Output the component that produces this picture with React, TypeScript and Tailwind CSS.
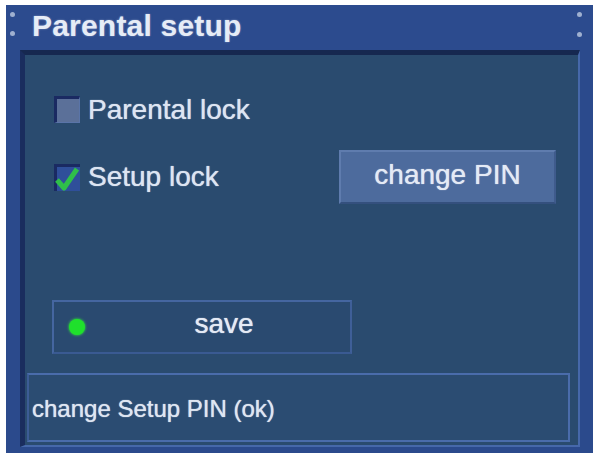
import React from "react";

const font = { fontFamily: '"Liberation Sans", Arial, sans-serif' };

function Dot() {
  return <div className="w-[5px] h-[5px] rounded-full bg-[#9fb0d0]" />;
}

function CheckBox({ checked }: { checked?: boolean }) {
  return (
    <div className="relative w-[26px] h-[27px] border-l-[3px] border-t-[3px] border-r border-b border-l-[#1a2a62] border-t-[#1a2a62] border-r-[#5a74a8] border-b-[#5a74a8] bg-[#5b7099]">
      {checked && (
        <svg viewBox="0 0 26 27" className="absolute -left-[3px] -top-[3px] w-[26px] h-[27px]">
          <rect x="0" y="0" width="26" height="27" fill="#2f4f9a" />
          <rect x="0" y="0" width="3" height="27" fill="#1a2a62" />
          <rect x="0" y="0" width="26" height="3" fill="#1a2a62" />
          <path d="M3 16 L10 24 L23 5" stroke="#2fbf4a" strokeWidth="5" fill="none" strokeLinejoin="round" />
        </svg>
      )}
    </div>
  );
}

export default function App() {
  return (
    <div className="w-[593px] h-[459px] bg-white pt-[5px] pl-[6px] pb-[6px]" style={font}>
      <div className="flex flex-col h-full bg-[#2b4a8c]">
        {/* Title bar */}
        <div className="relative h-[45px] shrink-0 bg-[#2c4b8e] flex items-center pl-[26px]">
          <div className="absolute left-[4px] top-[7px] flex flex-col gap-[14px]">
            <Dot />
            <Dot />
          </div>
          <div className="absolute right-[11px] top-[7px] flex flex-col gap-[15px]">
            <Dot />
            <Dot />
          </div>
          <span className="text-[30px] font-bold text-[#e6ecf6] leading-none -mt-[4px] tracking-[0.2px] [text-shadow:0_0_2px_rgba(220,230,250,0.5)]">
            Parental setup
          </span>
        </div>

        {/* Body */}
        <div className="flex-1 flex pl-[14px] pr-[13px] pb-[6px]">
          <div className="flex-1 flex flex-col bg-[#2a4b6f] border-l-[5px] border-t-[5px] border-r-[2px] border-b-[2px] border-l-[#1a2d5e] border-t-[#162850] border-r-[#4668aa] border-b-[#4668aa]">
            {/* Parental lock */}
            <div className="mt-[41px] ml-[29px] h-[27px] flex items-center">
              <CheckBox />
              <span className="ml-[8px] text-[28px] text-[#dde5f2] leading-none [text-shadow:0_0_1px_#dde5f2]">Parental lock</span>
            </div>

            {/* Setup lock + change PIN */}
            <div className="mt-[27px] ml-[29px] h-[54px] flex items-center">
              <div className="w-[285px] flex items-center">
                <CheckBox checked />
                <span className="ml-[8px] text-[28px] text-[#dde5f2] leading-none [text-shadow:0_0_1px_#dde5f2]">Setup lock</span>
              </div>
              <div className="w-[217px] h-[54px] flex items-center justify-center bg-[#4d6b9d] border-t-2 border-l-2 border-[#5f7cae] border-r-2 border-b-2 border-r-[#3f5b8c] border-b-[#34507e]">
                <span className="text-[28px] text-[#e4eaf5] leading-none -mt-[4px] [text-shadow:0_0_1px_#e4eaf5]">change PIN</span>
              </div>
            </div>

            {/* Save */}
            <div className="mt-[96px] ml-[27px] w-[300px] h-[54px] flex items-center border-2 border-[#4566a0] border-r-[#3f5f98] border-b-[#3a5a92] bg-[#2a4a70]">
              <div className="ml-[15px] w-[16px] h-[16px] rounded-full bg-[#1fe02c] shadow-[0_0_3px_#3f3]" />
              <div className="flex-1 flex justify-center pr-[12px]">
                <span className="ml-[25px] text-[28px] text-[#e4eaf5] leading-none -mt-[6px] [text-shadow:0_0_1px_#e4eaf5]">save</span>
              </div>
            </div>

            {/* Status */}
            <div className="mt-[19px] ml-[2px] w-[543px] h-[69px] flex items-center pl-[3px] border-2 border-[#4a6cab] border-l-[#3c5c96] bg-[#2b4c72]">
              <span className="text-[24px] text-[#dfe6f2] leading-none mt-[3px] [text-shadow:0_0_1px_#dfe6f2]">change Setup PIN (ok)</span>
            </div>
          </div>
        </div>
      </div>
    </div>
  );
}
